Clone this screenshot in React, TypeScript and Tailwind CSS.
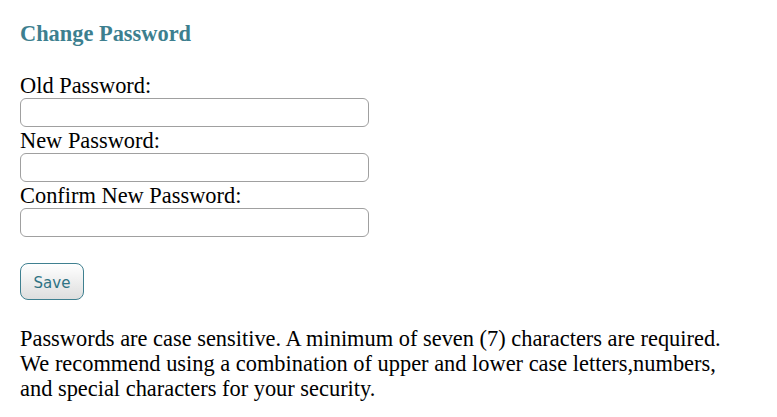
export default function App() {
  return (
    <div className="min-h-screen bg-white px-5 pt-[21px] text-black font-['Liberation_Serif',serif] text-[22.4px] leading-[25px]">
      <h2 className="text-[22.4px] font-bold text-[#3d7f8f] leading-[25px]">Change Password</h2>

      <form className="mt-[27px] flex flex-col" onSubmit={(e) => e.preventDefault()}>
        <label className="block">Old Password:</label>
        <input
          type="password"
          className="h-[29px] w-[349px] rounded-[6px] border border-[#a0a0a0] bg-white outline-none"
        />
        <label className="mt-[1px] block">New Password:</label>
        <input
          type="password"
          className="h-[29px] w-[349px] rounded-[6px] border border-[#a0a0a0] bg-white outline-none"
        />
        <label className="mt-[1px] block">Confirm New Password:</label>
        <input
          type="password"
          className="h-[29px] w-[349px] rounded-[6px] border border-[#a0a0a0] bg-white outline-none"
        />

        <div className="mt-[26px]">
          <button
            type="submit"
            className="h-[37px] w-[64px] rounded-[8px] border border-[#3f8090] bg-gradient-to-b from-white to-[#dedede] pt-[3px] font-['DejaVu_Sans',sans-serif] text-[15px] text-[#2f7384]"
          >
            Save
          </button>
        </div>
      </form>

      <p className="mt-[26px]">
        Passwords are case sensitive. A minimum of seven (7) characters are required.
        <br />
        We recommend using a combination of upper and lower case letters,numbers,
        <br />
        and special characters for your security.
      </p>
    </div>
  )
}
